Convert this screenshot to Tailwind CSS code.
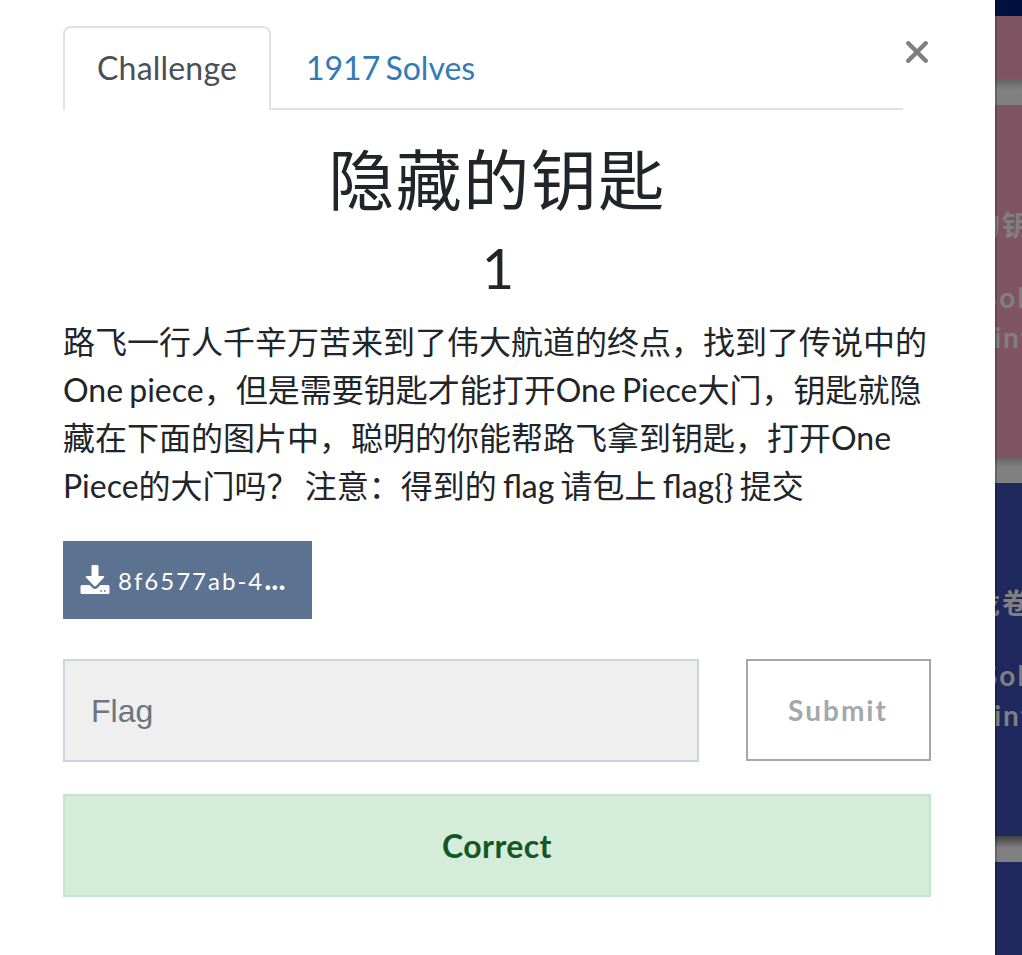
<!DOCTYPE html>
<html lang="zh-CN">
<head>
<meta charset="utf-8">
<title>Challenge</title>
<script src="https://cdn.jsdelivr.net/npm/@tailwindcss/browser@4"></script>
</head>
<body class="flex h-[955px] w-[1022px] overflow-hidden bg-white font-['Lato','Noto_Sans_CJK_SC',sans-serif] text-[32px] leading-[48px] text-[#212529]">
<main class="flex w-[995px] shrink-0 flex-col pt-[26px] pl-[63px]">
  <div class="flex h-[84px] w-[868px] items-start justify-between">
    <nav class="flex h-[84px] w-[840px]">
      <a class="h-[84px] w-[208px] rounded-t-[8px] border-2 border-b-0 border-[#dee2e6] pt-[16px] pl-8 tracking-[0.2px] text-[#495057]">Challenge</a>
      <a class="h-[84px] grow border-b-2 border-[#dee2e6] pt-[18px] pl-[35px] text-[#337ab7] [word-spacing:-3px]">1917 Solves</a>
    </nav>
    <button class="mt-[15px] mr-[3px] size-[22px]" aria-label="Close">
      <svg viewBox="0 0 22 22" class="size-full" fill="none" stroke="#7f7f7f" stroke-width="4.4" stroke-linecap="round"><path d="M2.300 2.300L19.700 19.700M19.700 2.300L2.300 19.700"/></svg>
    </button>
  </div>
  <h2 class="mt-[31px] h-[80px] w-[868px] text-center text-[66px] leading-[78px] tracking-[1.500px] whitespace-nowrap">隐藏的钥匙</h2>
  <h3 class="mt-[13px] h-[68px] w-[868px] pl-[2px] text-center text-[56px] leading-[68px]">1</h3>
  <p class="mt-[16px] h-[192px] w-[880px] whitespace-nowrap [word-spacing:-2px]">路飞一行人千辛万苦来到了伟大航道的终点，找到了传说中的<br>One piece，但是需要钥匙才能打开One Piece大门，钥匙就隐<br>藏在下面的图片中，聪明的你能帮路飞拿到钥匙，打开One<br>Piece的大门吗？ 注意：得到的 flag 请包上 flag{} 提交</p>
  <a class="mt-[31px] flex h-[78px] w-[249px] items-center bg-[#5b7290] pt-px pl-[17px] text-[24px] tracking-[2px] text-white">
    <svg viewBox="0 0 30 30" class="mr-[8px] size-[30px] shrink-0 -translate-y-px" fill="#fff"><path d="M11.5 1.2Q11.5 0 12.7 0h4.6q1.200 0 1.200 1.200V11h5q1.400.2.5 1.400L16 20.900q-1 .900-2 0L6 12.400Q5 11.200 6.500 11h5Z"/><path fill-rule="evenodd" d="M2 20h7.500l3.200 3.100q2.300 1.900 4.600 0L20.500 20H28q1.500 0 1.500 1.500v6Q29.500 29 28 29H2Q.5 29 .5 27.500v-6Q.5 20 2 20Zm18.300 5.200v1.600h1.600v-1.600Zm3.700 0v1.600h1.600v-1.600Z"/></svg>
    <span class="whitespace-nowrap">8f6577ab-4<b class="text-[30px] leading-none font-bold tracking-[0px]">...</b></span>
  </a>
  <div class="mt-[40px] flex h-[103px] items-start">
    <div class="flex h-[103px] w-[636px] items-center border-2 border-[#ced4da] bg-[#efefef] pt-px pl-[26px] font-['Liberation_Sans',sans-serif] text-[#6c757d]">Flag</div>
    <button class="ml-[47px] h-[102px] w-[185px] border-2 border-[#a3a8ad] pr-px text-[28px] font-bold tracking-[2px] text-[#a3a8ad]">Submit</button>
  </div>
  <div class="mt-[32px] flex h-[103px] w-[868px] items-center justify-center border-2 border-[#c3e6cb] bg-[#d4edda] pt-px font-bold tracking-[0.4px] text-[#155724]">Correct</div>
</main>
<aside class="relative flex w-[27px] shrink-0 flex-col overflow-hidden bg-[#808080] text-[28px] leading-[40px] font-bold tracking-[2px] whitespace-nowrap text-[#808080]">
  <div class="h-[16px] shrink-0 bg-[#001040]"></div>
  <div class="h-[63px] shrink-0 bg-[#7f5564]"></div>
  <div class="h-[26px] shrink-0 bg-linear-to-b from-[#646464] to-[#808080] to-40%"></div>
  <div class="h-[352px] shrink-0 overflow-hidden bg-[#7f5564] pt-[100px]">
    <p class="-ml-[23px]">的钥匙</p>
    <p class="mt-[32px] -ml-[13px]">Solves</p>
    <p class="-ml-[1px]">int</p>
  </div>
  <div class="h-[26px] shrink-0 bg-linear-to-b from-[#646464] to-[#808080] to-40%"></div>
  <div class="h-[353px] shrink-0 overflow-hidden bg-[#1f295d] pt-[100px]">
    <p class="-ml-[23px]">龙卷风</p>
    <p class="mt-[32px] -ml-[13px]">Solves</p>
    <p class="-ml-[1px]">int</p>
  </div>
  <div class="h-[26px] shrink-0 bg-linear-to-b from-[#404040] to-[#808080] to-45%"></div>
  <div class="grow bg-[#1f295d]"></div>
  <div class="absolute inset-y-0 left-0 w-[2px] bg-black/20"></div>
</aside>
</body>
</html>
